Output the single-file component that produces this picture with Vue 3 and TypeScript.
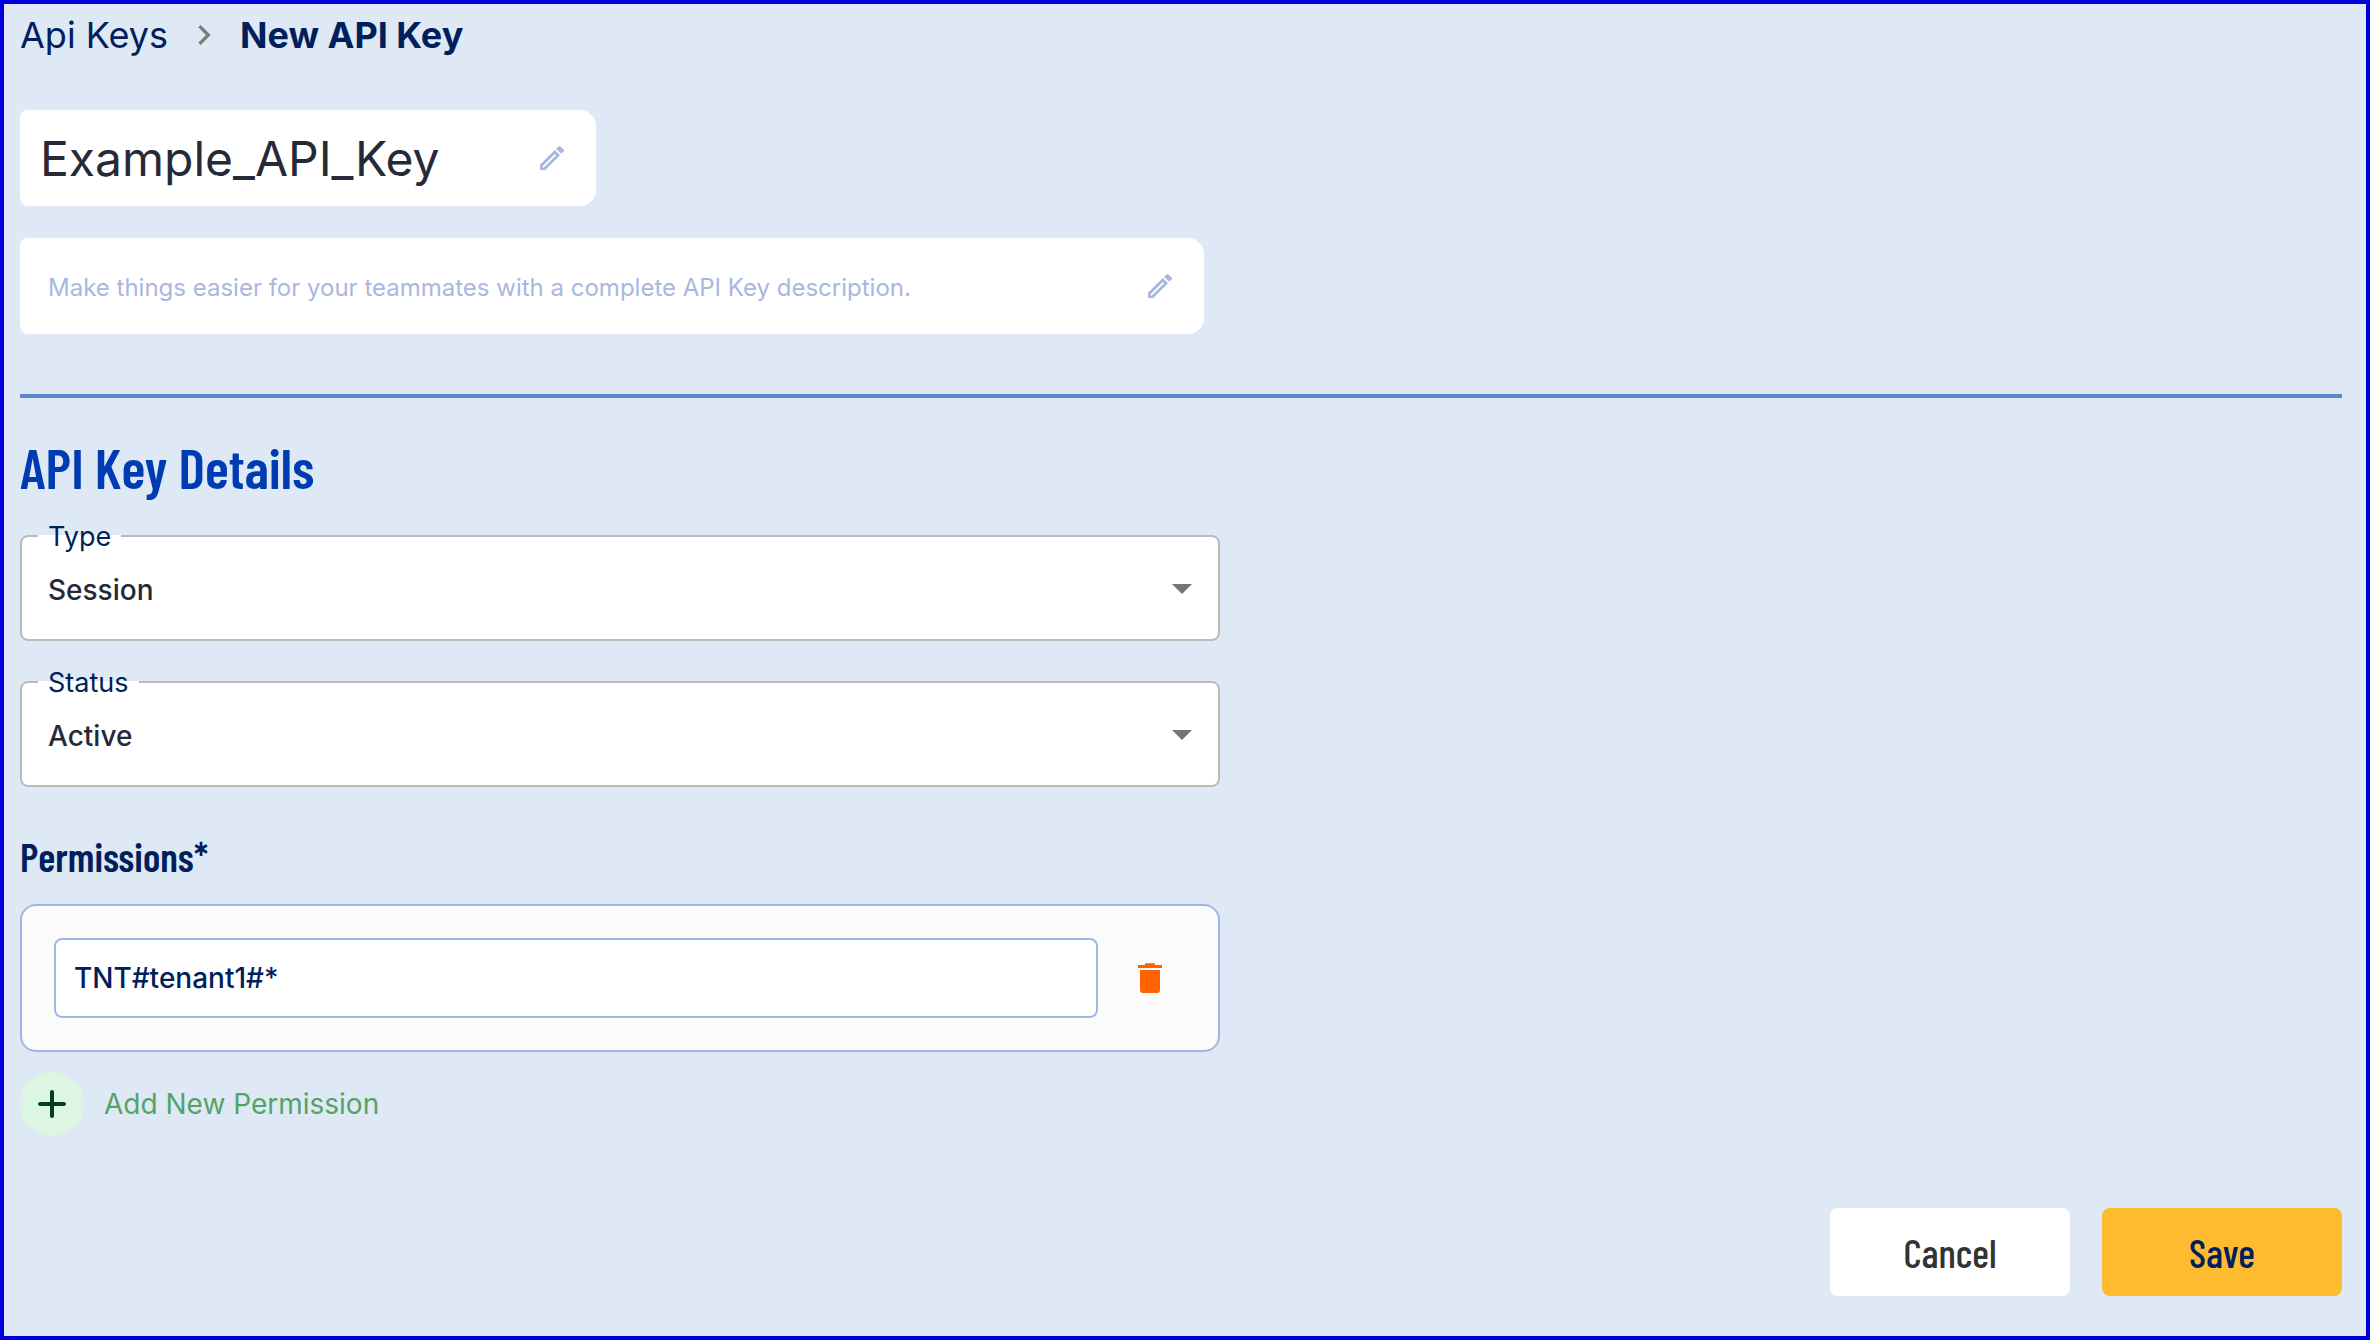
<script setup lang="ts">
import { ref } from 'vue'

interface SelectField {
  id: string
  label: string
  value: string
  options: string[]
}

const keyName = ref('Example_API_Key')
const description = ref('')
const fields = ref<SelectField[]>([
  { id: 'type', label: 'Type', value: 'Session', options: ['Session', 'Token'] },
  { id: 'status', label: 'Status', value: 'Active', options: ['Active', 'Inactive'] },
])
const permissions = ref<string[]>(['TNT#tenant1#*'])

const pencil =
  'M3 17.2v3.3c0 .28.22.5.5.5h3.3c.13 0 .26-.05.35-.15L17.95 9.94l-3.9-3.9L3.15 16.85c-.1.1-.15.22-.15.35zM5.9 19.1H4.9v-1l9.16-9.1 1 1L5.9 19.1zM20.71 5.63l-2.34-2.34a1 1 0 0 0-1.41 0l-1.83 1.83 3.75 3.75 1.83-1.83a1 1 0 0 0 0-1.41z'

function addPermission() {
  permissions.value.push('')
}
function removePermission(index: number) {
  permissions.value.splice(index, 1)
}
</script>

<template>
  <main class="page">
    <nav class="crumbs" aria-label="Breadcrumb">
      <a href="#api-keys">Api Keys</a>
      <svg class="chevron" viewBox="0 0 24 24" aria-hidden="true">
        <path d="M10 6 8.59 7.41 13.17 12l-4.58 4.59L10 18l6-6z" />
      </svg>
      <span class="current" aria-current="page">New API Key</span>
    </nav>

    <div class="editable name">
      <input v-model="keyName" type="text" aria-label="API Key name" />
      <button type="button" aria-label="Edit name">
        <svg viewBox="0 0 24 24" aria-hidden="true"><path fill-rule="evenodd" :d="pencil" /></svg>
      </button>
    </div>

    <div class="editable description">
      <input
        v-model="description"
        type="text"
        aria-label="API Key description"
        placeholder="Make things easier for your teammates with a complete API Key description."
      />
      <button type="button" aria-label="Edit description">
        <svg viewBox="0 0 24 24" aria-hidden="true"><path fill-rule="evenodd" :d="pencil" /></svg>
      </button>
    </div>

    <hr class="divider" />

    <h1 class="title">API Key Details</h1>

    <div class="fields">
      <fieldset v-for="field in fields" :key="field.id" class="field">
        <legend><label :for="field.id">{{ field.label }}</label></legend>
        <select :id="field.id" v-model="field.value">
          <option v-for="option in field.options" :key="option">{{ option }}</option>
        </select>
        <svg class="arrow" viewBox="0 0 20 10" aria-hidden="true"><path d="M0 0l10 10L20 0z" /></svg>
      </fieldset>
    </div>

    <h2 class="subtitle">Permissions*</h2>

    <div class="permissions">
      <div v-for="(_, index) in permissions" :key="index" class="permission">
        <input v-model="permissions[index]" type="text" aria-label="Permission" />
        <button type="button" aria-label="Delete permission" @click="removePermission(index)">
          <svg viewBox="0 0 24 30" aria-hidden="true">
            <path d="M7 2V1.2Q7 .3 8 .3h8q1 0 1 .9V2h7v3H0V2zM2 7h20v20q0 3-3 3H5q-3 0-3-3z" />
          </svg>
        </button>
      </div>
    </div>

    <button type="button" class="add" @click="addPermission">
      <span class="plus">
        <svg viewBox="0 0 28 28" aria-hidden="true"><path d="M14 2v24M2 14h24" /></svg>
      </span>
      Add New Permission
    </button>

    <footer class="actions">
      <button type="button" class="cancel">Cancel</button>
      <button type="button" class="save">Save</button>
    </footer>
  </main>
</template>

<style>
body {
  margin: 0;
}
</style>

<style scoped>
.page,
.page * {
  box-sizing: border-box;
}
.page {
  display: flex;
  flex-direction: column;
  align-items: flex-start;
  min-height: 100vh;
  padding: 8px 24px 36px 16px;
  border: 4px solid #0000d8;
  background: #dfe9f5;
  color: #001f5b;
  font-family: Inter, sans-serif;
}
button,
input,
select {
  margin: 0;
  border: 0;
  padding: 0;
  background: none;
  color: inherit;
  font: inherit;
}
button {
  cursor: pointer;
}
svg {
  display: block;
}
.crumbs {
  display: flex;
  align-items: center;
  gap: 16px;
  font-size: 36px;
  line-height: 46px;
}
.crumbs a {
  color: inherit;
  text-decoration: none;
}
.chevron {
  width: 40px;
  height: 40px;
  fill: #7c7c7c;
}
.current {
  font-weight: 700;
}
.editable {
  display: flex;
  align-items: center;
  max-width: 100%;
  height: 96px;
  padding-right: 28px;
  border-radius: 8px 16px 16px 8px;
  background: #fff;
}
.editable input {
  flex: 1;
  min-width: 0;
  height: 100%;
}
.editable svg {
  width: 32px;
  height: 32px;
  fill: #a9b7df;
}
.name {
  width: 576px;
  margin-top: 52px;
  padding-left: 20px;
  color: #262938;
  font-size: 48px;
}
.description {
  width: 1184px;
  margin-top: 32px;
  padding-left: 28px;
  font-size: 24px;
}
.description input {
  padding-top: 2px;
}
.description input::placeholder {
  color: #a9b7df;
  opacity: 1;
}
.divider {
  width: 100%;
  height: 4px;
  margin: 60px 0 0;
  border: 0;
  background: #5c86cf;
}
.title,
.subtitle,
.actions {
  font-family: "Barlow Condensed", "Liberation Sans Narrow", sans-serif;
}
.title {
  margin: 33px 0 0;
  color: #003cb1;
  font-size: 56px;
  font-weight: 600;
  line-height: 72px;
}
.fields {
  display: flex;
  flex-direction: column;
  gap: 23px;
  width: 1200px;
  max-width: 100%;
  margin-top: 15px;
}
.field {
  position: relative;
  min-width: 0;
  margin: 0;
  padding: 0 0 0 16px;
  border: 2px solid #bababa;
  border-radius: 8px;
  background: #fff;
}
.field legend {
  padding: 2px 10px 0;
  font-size: 27px;
  line-height: 34px;
}
.field select {
  display: block;
  width: 100%;
  height: 85px;
  padding: 0 60px 13px 10px;
  appearance: none;
  color: #262938;
  font-size: 28px;
  font-weight: 500;
}
.arrow {
  position: absolute;
  right: 26px;
  bottom: 45px;
  width: 20px;
  height: 10px;
  fill: #757575;
  pointer-events: none;
}
.subtitle {
  margin: 43px 0 0;
  font-size: 40px;
  font-weight: 600;
  line-height: 52px;
}
.permissions {
  display: flex;
  flex-direction: column;
  gap: 20px;
  width: 1200px;
  max-width: 100%;
  margin-top: 22px;
  padding: 32px;
  border: 2px solid #9fb7e3;
  border-radius: 16px;
  background: #fbfbfb;
}
.permission {
  display: flex;
  align-items: center;
  gap: 16px;
}
.permission input {
  flex: 1;
  min-width: 0;
  height: 80px;
  padding: 0 18px;
  border: 2px solid #9fb7e3;
  border-radius: 8px;
  background: #fff;
  font-size: 28px;
  font-weight: 500;
}
.permission button {
  display: flex;
  justify-content: center;
  width: 72px;
}
.permission svg {
  width: 24px;
  height: 30px;
  fill: #ff6200;
}
.add {
  display: flex;
  align-items: center;
  gap: 20px;
  margin-top: 20px;
  color: #54a368;
  font-size: 28px;
}
.plus {
  display: grid;
  place-items: center;
  width: 64px;
  height: 64px;
  border-radius: 50%;
  background: #dcf6e3;
}
.plus svg {
  width: 28px;
  height: 28px;
  fill: none;
  stroke: #00421c;
  stroke-width: 4;
  stroke-linecap: round;
}
.actions {
  display: flex;
  gap: 32px;
  align-self: flex-end;
  margin-top: 72px;
}
.actions button {
  width: 240px;
  height: 88px;
  border-radius: 8px;
  font-size: 40px;
  font-weight: 500;
}
.cancel {
  background: #fff;
  color: #333;
}
.save {
  background: #ffbb30;
  color: #001f5b;
}
</style>
